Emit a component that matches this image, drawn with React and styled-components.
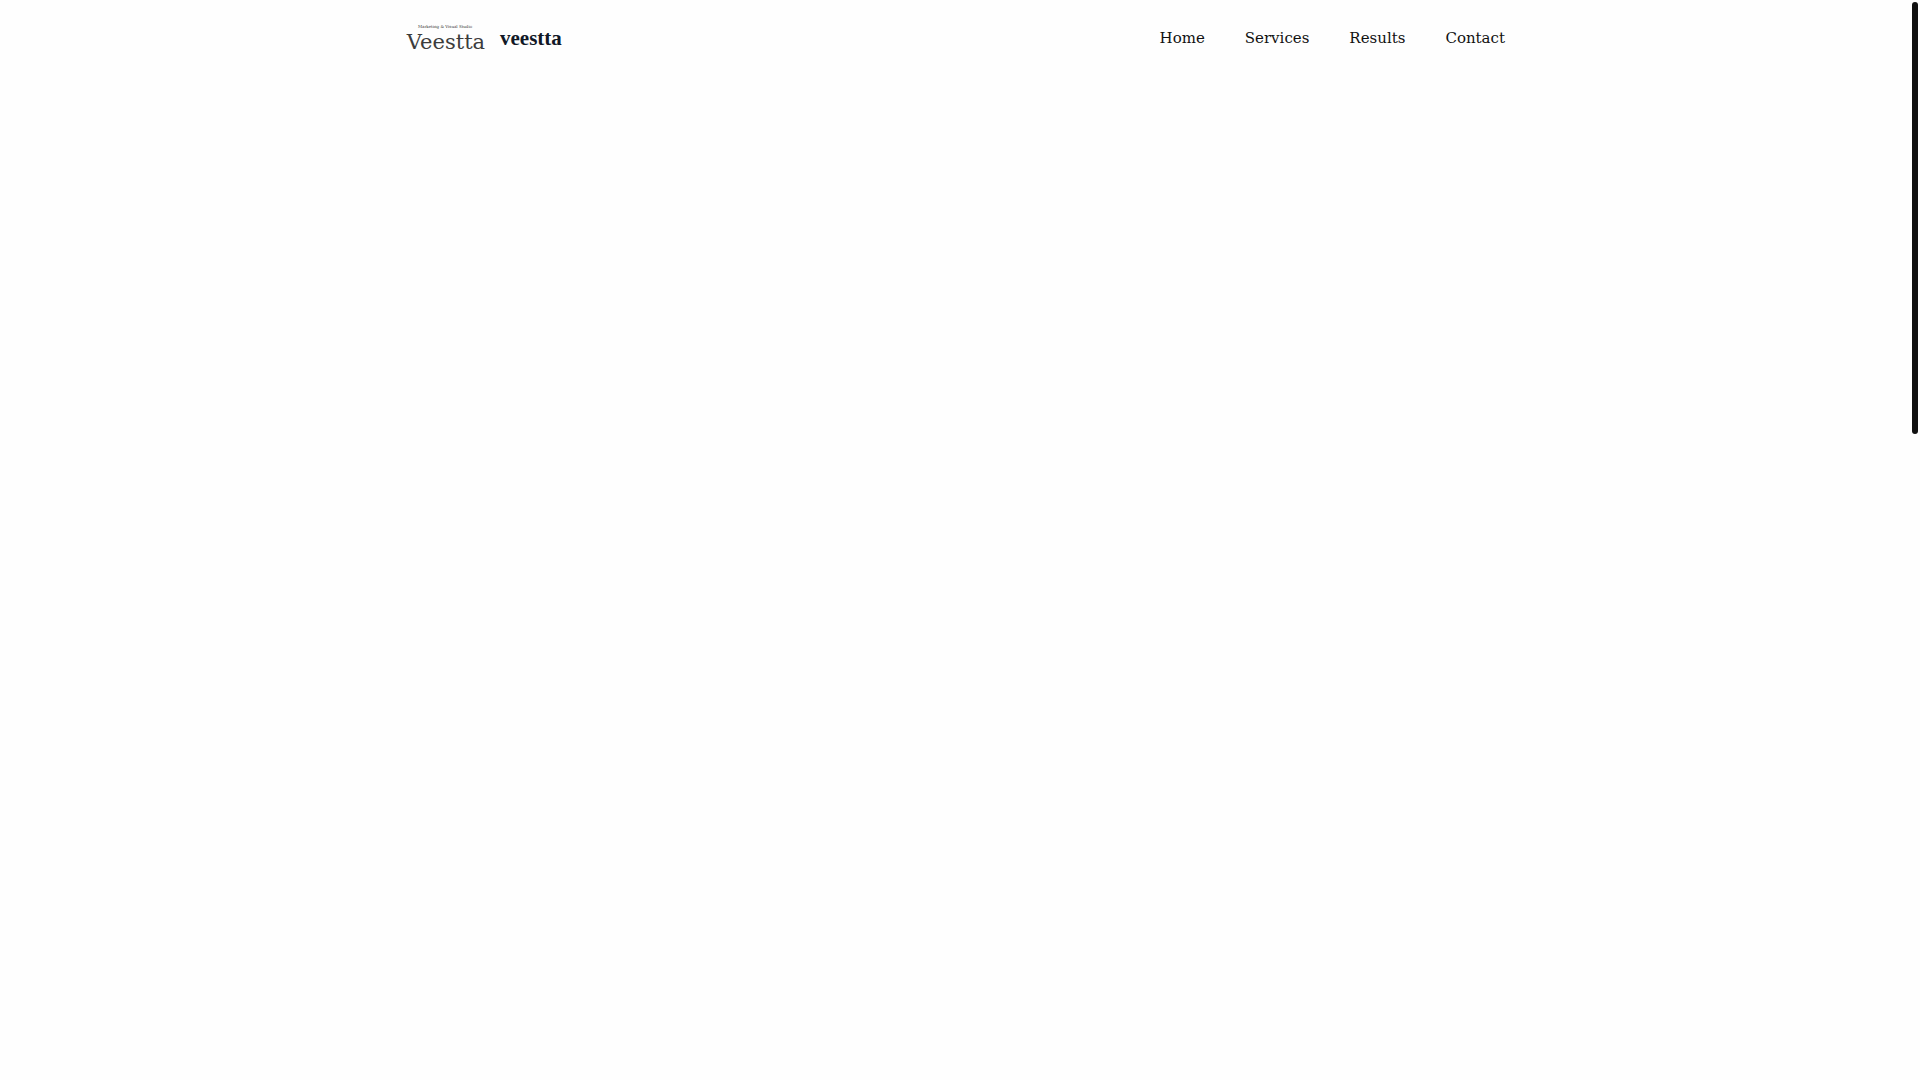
import React from "react";
import styled, { createGlobalStyle } from "styled-components";

const GlobalStyle = createGlobalStyle`
  *, *::before, *::after { box-sizing: border-box; }
  body {
    margin: 0;
    background: #fefefe;
    color: #111111;
    font-family: "DejaVu Serif", serif;
  }
`;

const Page = styled.div`
  min-height: 100vh;
  padding-right: 10px;
`;

const Header = styled.header`
  display: flex;
  align-items: center;
  justify-content: space-between;
  width: 100%;
  max-width: 1100px;
  margin: 0 auto;
  padding: 19px 0;
`;

const Brand = styled.a`
  display: flex;
  align-items: center;
  gap: 15px;
  color: #111827;
  text-decoration: none;
`;

const Logo = styled.svg`
  display: block;
  width: 80px;
  height: 38px;
  overflow: visible;
  fill: #3c3c3c;
`;

const BrandName = styled.span`
  font-family: "Liberation Serif", "Times New Roman", serif;
  font-size: 21px;
  line-height: 26px;
  font-weight: 700;
`;

const Nav = styled.nav`
  display: flex;
  gap: 40px;
`;

const NavLink = styled.a`
  color: #111111;
  font-size: 15px;
  line-height: 24px;
  text-decoration: none;
`;

const ScrollThumb = styled.div`
  position: fixed;
  top: 2px;
  right: 2px;
  width: 6px;
  height: 40%;
  border-radius: 3px;
  background: #111111;
`;

const links = ["Home", "Services", "Results", "Contact"];

export default function App() {
  return (
    <>
      <GlobalStyle />
      <Page>
        <Header>
          <Brand href="#home">
            <Logo viewBox="0 0 80 38" role="img" aria-label="Veestta Marketing & Visual Studio">
              <text x="40" y="9" fontSize="4" textAnchor="middle">Marketing &amp; Visual Studio</text>
              <text x="41" y="30" fontSize="21" textAnchor="middle">Veestta</text>
            </Logo>
            <BrandName>veestta</BrandName>
          </Brand>
          <Nav aria-label="Main">
            {links.map((label) => (
              <NavLink key={label} href={`#${label.toLowerCase()}`}>{label}</NavLink>
            ))}
          </Nav>
        </Header>
      </Page>
      <ScrollThumb aria-hidden="true" />
    </>
  );
}
